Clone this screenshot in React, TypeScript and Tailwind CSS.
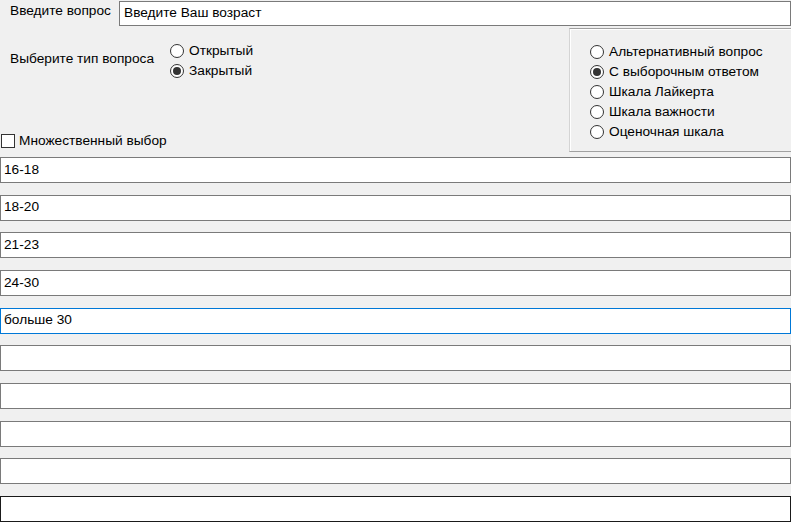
import React from "react";

function Radio({ label, checked }: { label: string; checked?: boolean }) {
  return (
    <div className="flex h-[20px] items-center">
      <div className="flex h-[14px] w-[14px] items-center justify-center rounded-full border border-[#333333] bg-white">
        {checked && <div className="h-[8px] w-[8px] rounded-full bg-[#333333]" />}
      </div>
      <span className="ml-[5px] leading-[20px]">{label}</span>
    </div>
  );
}

function Box({ text, variant }: { text?: string; variant?: "focus" | "hover" }) {
  const border =
    variant === "focus"
      ? "border-[#0078d7]"
      : variant === "hover"
      ? "border-[#1a1a1a]"
      : "border-[#7a7a7a]";
  return (
    <div className={`flex h-[26px] w-full items-center border bg-white pl-[3px] ${border}`}>
      {text}
    </div>
  );
}

export default function App() {
  const boxes: { text?: string; variant?: "focus" | "hover" }[] = [
    { text: "16-18" },
    { text: "18-20" },
    { text: "21-23" },
    { text: "24-30" },
    { text: "больше 30", variant: "focus" },
    {},
    {},
    {},
    {},
    { variant: "hover" },
  ];
  return (
    <div
      className="flex h-[522px] w-[791px] flex-col overflow-hidden bg-[#f0f0f0] text-[13.7px] text-black"
      style={{ fontFamily: '"Liberation Sans", Arial, sans-serif' }}
    >
      <div className="flex h-[27px] pt-[1px]">
        <div className="h-[20px] w-[119px] pl-[10px] leading-[20px]">Введите вопрос</div>
        <div className="flex h-[25px] flex-1 items-center border border-[#7a7a7a] bg-white pl-[4px]">
          Введите Ваш возраст
        </div>
      </div>
      <div className="mt-[1px] flex h-[124px]">
        <div className="flex flex-1 flex-col">
          <div className="mt-[13px] flex">
            <div className="flex w-[170px] items-center pb-[3px] pl-[10px]">Выберите тип вопроса</div>
            <div className="flex flex-col">
              <Radio label="Открытый" />
              <Radio label="Закрытый" checked />
            </div>
          </div>
          <div className="mb-[3px] mt-auto flex h-[16px] items-center">
            <div className="ml-[1px] h-[14px] w-[14px] border border-[#333333] bg-white" />
            <span className="ml-[4px]">Множественный выбор</span>
          </div>
        </div>
        <div className="flex w-[222px] flex-col border-b border-l border-t border-b-[#a0a0a0] border-l-[#d4d4d4] border-t-[#a0a0a0] pl-[20px] pt-[13px] shadow-[inset_1px_1px_0_#ffffff]">
          <Radio label="Альтернативный вопрос" />
          <Radio label="С выборочным ответом" checked />
          <Radio label="Шкала Лайкерта" />
          <Radio label="Шкала важности" />
          <Radio label="Оценочная шкала" />
        </div>
      </div>
      <div className="mt-[5px] flex flex-col gap-[11.7px]">
        {boxes.map((b, i) => (
          <Box key={i} text={b.text} variant={b.variant} />
        ))}
      </div>
    </div>
  );
}
